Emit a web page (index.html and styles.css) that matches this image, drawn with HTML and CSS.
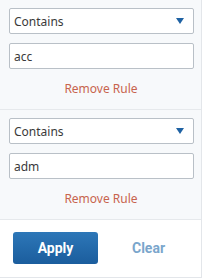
FILE: index.html
```html
<!DOCTYPE html>
<html>
<head>
<meta charset="utf-8">
<link rel="stylesheet" href="styles.css">
</head>
<body>
<div class="panel">
  <div class="rule">
    <div class="select"><span>Contains</span><svg class="caret" width="8" height="6" viewBox="0 0 8 6"><path d="M0 0H8L4 6Z" fill="#1f62a3"/></svg></div>
    <div class="input">acc</div>
    <div class="remove">Remove Rule</div>
  </div>
  <div class="rule second">
    <div class="select"><span>Contains</span><svg class="caret" width="8" height="6" viewBox="0 0 8 6"><path d="M0 0H8L4 6Z" fill="#1f62a3"/></svg></div>
    <div class="input">adm</div>
    <div class="remove">Remove Rule</div>
  </div>
  <div class="actions">
    <div class="btn apply">Apply</div>
    <div class="btn clear">Clear</div>
  </div>
</div>
</body>
</html>
```
FILE: styles.css
```css
html, body {
  margin: 0;
  padding: 0;
  background: #ffffff;
}
body {
  font-family: "Noto Sans", "Open Sans", sans-serif;
  width: 204px;
  height: 279px;
  overflow: hidden;
}
.panel {
  width: 201px;
  height: 277px;
  border-right: 1px solid #e3e6ea;
  border-bottom: 1px solid #e3e6ea;
  background: #fff;
}
.rule {
  background: #f7f9fb;
  padding: 8px 8px 10px 9px;
  border-bottom: 1px solid #e6e9ec;
}
.select, .input {
  box-sizing: border-box;
  height: 26px;
  width: 185px;
  background: #fff;
  border: 1px solid #b9c0c7;
  border-radius: 2px;
  font-size: 12px;
  color: #3a3a3a;
  display: flex;
  align-items: center;
  padding: 0 9px 0 4px;
}
.select {
  justify-content: space-between;
}
.caret {
  display: block;
}
.input {
  margin-top: 9px;
}
.remove {
  margin-top: 10px;
  height: 20px;
  line-height: 20px;
  text-align: center;
  font-size: 12px;
  color: #c8644d;
}
.actions {
  display: flex;
  gap: 8px;
  padding: 12px 0 0 13px;
}
.btn {
  width: 85px;
  height: 32px;
  line-height: 32px;
  text-align: center;
  font-family: Roboto, "Liberation Sans", sans-serif;
  font-weight: bold;
  font-size: 14px;
  border-radius: 3px;
}
.apply {
  background: linear-gradient(#2d77b8, #1b5d9d);
  color: #fff;
}
.clear {
  color: #7aa6cc;
}
```
